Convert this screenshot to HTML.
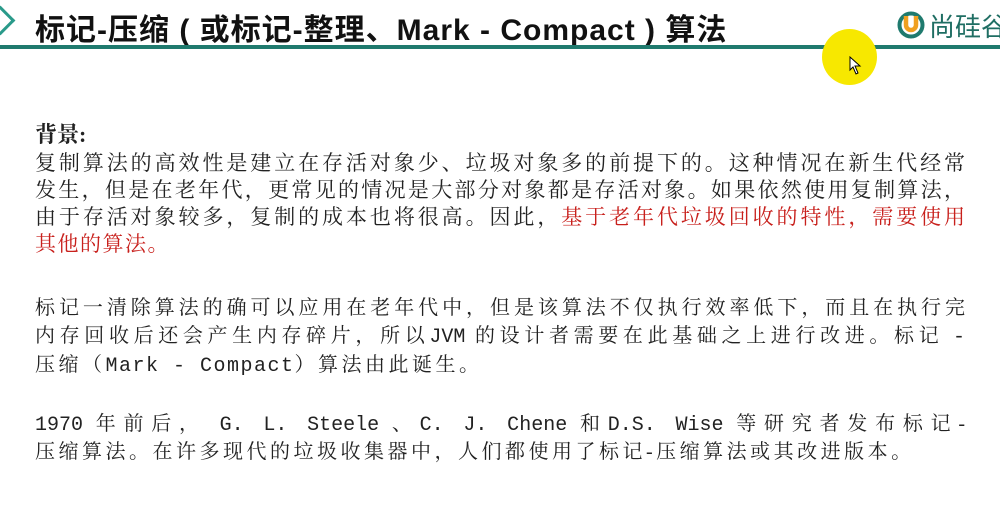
<!DOCTYPE html>
<html><head><meta charset="utf-8"><style>
body{margin:0;width:1000px;height:507px;background:#fff;position:relative;overflow:hidden;font-family:"Liberation Serif","Noto Serif CJK SC","Noto Sans CJK SC",serif;color:#222}
.t{position:absolute;left:35px;top:5px;font:bold 30px "Liberation Sans","Noto Sans CJK SC",sans-serif;color:#111;white-space:nowrap;letter-spacing:1px}
.bar{position:absolute;left:0;top:45px;width:1000px;height:4px;background:#1f7a6e}
.chev{position:absolute;left:-10px;top:10px;width:18px;height:18px;border-right:3px solid #2a9a8a;border-top:3px solid #2a9a8a;transform:rotate(45deg)}
.l{position:absolute;left:35px;width:930px;font-size:21px;line-height:27px;white-space:nowrap;text-align:justify;text-align-last:justify}
.s{text-align-last:left}
.m{font-family:"Liberation Mono",monospace}
.r{color:#c8201c}
</style></head><body>
<div class="chev"></div>
<div class="t">标记-压缩 ( 或标记-整理、Mark - Compact ) 算法</div>
<div class="bar"></div>
<svg style="position:absolute;left:897px;top:11px" width="30" height="28"><circle cx="14" cy="14" r="11.5" fill="none" stroke="#1f7a6e" stroke-width="4"/><path d="M9 5 V14 A5 5 0 0 0 19 14 V5" fill="none" stroke="#f0a020" stroke-width="4.5"/></svg>
<div style="position:absolute;left:929px;top:9px;font:26px 'Noto Sans CJK SC',sans-serif;color:#1f6e63;white-space:nowrap;line-height:34px">尚硅谷</div>
<div style="position:absolute;left:822px;top:29px;width:55px;height:56px;border-radius:50%;background:#f7e800"></div>
<svg style="position:absolute;left:849px;top:56px" width="14" height="20"><path d="M1 1 L1 14 L4 11 L7 18 L9 17 L6 10 L11 10 Z" fill="#fff" stroke="#000" stroke-width="1"/></svg>
<div class="l s" style="top:121px;font-weight:bold;font-size:22px">背景:</div>
<div class="l" style="top:150px">复制算法的高效性是建立在存活对象少、垃圾对象多的前提下的。这种情况在新生代经常</div>
<div class="l" style="top:177px">发生，但是在老年代，更常见的情况是大部分对象都是存活对象。如果依然使用复制算法，</div>
<div class="l" style="top:204px">由于存活对象较多，复制的成本也将很高。因此，<span class="r">基于老年代垃圾回收的特性，需要使用</span></div>
<div class="l s r" style="top:231px;letter-spacing:1.5px">其他的算法。</div>
<div class="l" style="top:295px;font-size:20px">标记一清除算法的确可以应用在老年代中，但是该算法不仅执行效率低下，而且在执行完</div>
<div class="l" style="top:323px;font-size:20px">内存回收后还会产生内存碎片，所以<span class="m">JVM</span> 的设计者需要在此基础之上进行改进。标记 <span class="m">-</span></div>
<div class="l s" style="top:352px;font-size:20px;letter-spacing:3.5px">压缩（<span class="m" style="letter-spacing:1.5px">Mark - Compact</span>）算法由此诞生。</div>
<div class="l" style="top:411px;font-size:20px"><span class="m">1970</span> 年前后， <span class="m">G. L. Steele</span> 、<span class="m">C. J. Chene</span> 和<span class="m">D.S. Wise</span> 等研究者发布标记-</div>
<div class="l s" style="top:439px;font-size:20px;letter-spacing:3.5px">压缩算法。在许多现代的垃圾收集器中，人们都使用了标记-压缩算法或其改进版本。</div>
</body></html>
